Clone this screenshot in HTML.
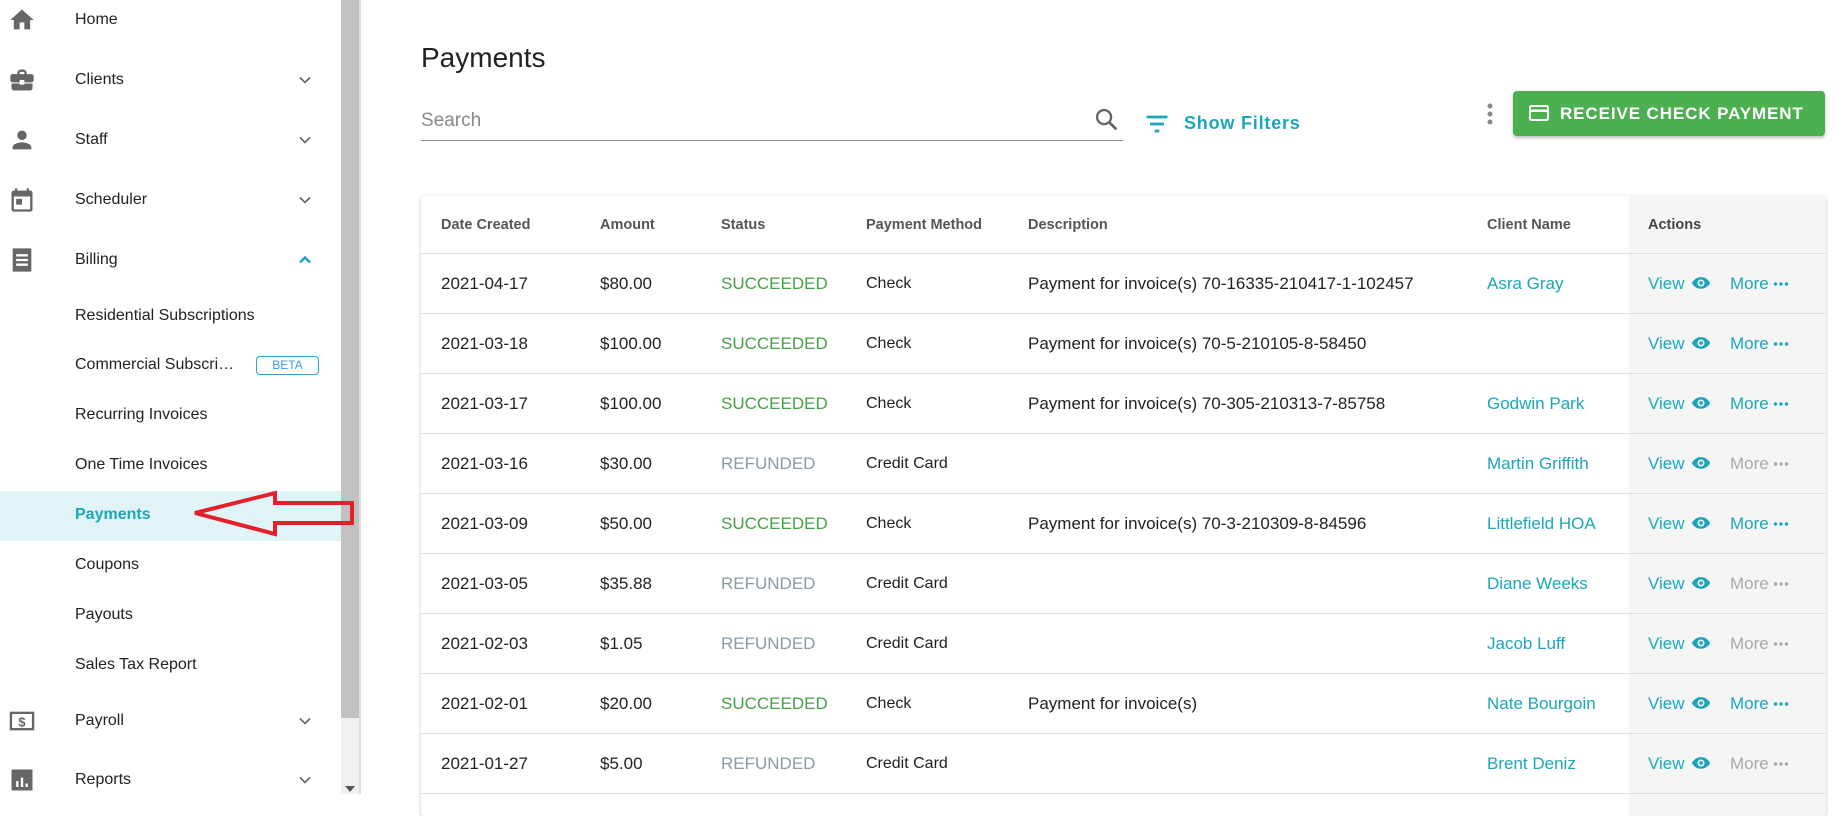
<!DOCTYPE html>
<html><head><meta charset="utf-8"><style>
*{margin:0;padding:0;box-sizing:border-box}
body{width:1847px;height:794px;overflow:hidden;background:#fff;font-family:"Liberation Sans",sans-serif;position:relative;color:#222}
.sb{position:absolute;left:0;top:0;width:341px;height:794px;background:#fff}
.it{position:absolute;left:0;width:341px;font-size:16px;color:#222}
.it .t{position:absolute;left:75px;transform:translateY(-50%)}
.it svg.ic{position:absolute;left:8px;transform:translateY(-50%)}
.chev{position:absolute;left:295px;transform:translateY(-50%)}
.scr{position:absolute;left:341px;top:0;width:18px;height:794px;background:#f1f1f1}
.thumb{position:absolute;left:341px;top:0;width:18px;height:718px;background:#c1c1c1}
.vline{position:absolute;left:359px;top:0;width:2px;height:794px;background:#ddd}
.abs{position:absolute}
.card{position:absolute;left:421px;top:196px;width:1405px;height:620px;background:#fff;box-shadow:0 1px 3px rgba(0,0,0,.25);border-radius:3px;overflow:hidden}
.act{position:absolute;left:1208px;top:0;width:197px;height:620px;background:#f5f5f5}
.row{position:absolute;left:0;width:1405px;height:60px;border-bottom:1px solid #e0e0e0}
.c{position:absolute;top:50%;transform:translateY(-50%);font-size:17px;white-space:nowrap}
.h .c{font-size:14.5px;font-weight:bold;color:#555}
.teal{color:#1ba6bc}
.suc{color:#43a047}
.ref{color:#8a9ba4}
.gm{color:#aaa}
</style></head><body>
<div class="sb">
 <div class="it" style="top:20px"><svg class="ic" width="28" height="28" viewBox="0 0 24 24"><path fill="#666" d="M10 20v-6h4v6h5v-8h3L12 3 2 12h3v8z"/></svg><span class="t">Home</span></div>
 <div class="it" style="top:80px"><svg class="ic" width="28" height="28" viewBox="0 0 24 24"><path fill="#666" d="M10 16v-1H3v4c0 1.1.9 2 2 2h14c1.1 0 2-.9 2-2v-4h-7v1h-4zm10-9h-4V5l-2-2h-4L8 5v2H4c-1.1 0-2 .9-2 2v3c0 1.1.9 2 2 2h6v-2h4v2h6c1.1 0 2-.9 2-2V9c0-1.1-.9-2-2-2zm-6 0h-4V5h4v2z"/></svg><span class="t">Clients</span><svg class="chev" width="20" height="20" viewBox="0 0 24 24"><path fill="none" stroke="#666" stroke-width="2" d="M6 9l6 6 6-6"/></svg></div>
 <div class="it" style="top:140px"><svg class="ic" width="28" height="28" viewBox="0 0 24 24"><path fill="#666" d="M12 12c2.2 0 4-1.8 4-4s-1.8-4-4-4-4 1.8-4 4 1.8 4 4 4zm0 2c-2.7 0-8 1.3-8 4v2h16v-2c0-2.7-5.3-4-8-4z"/></svg><span class="t">Staff</span><svg class="chev" width="20" height="20" viewBox="0 0 24 24"><path fill="none" stroke="#666" stroke-width="2" d="M6 9l6 6 6-6"/></svg></div>
 <div class="it" style="top:200px"><svg class="ic" width="28" height="28" viewBox="0 0 24 24"><path fill="#666" d="M19 4h-1V2h-2v2H8V2H6v2H5c-1.1 0-2 .9-2 2v14c0 1.1.9 2 2 2h14c1.1 0 2-.9 2-2V6c0-1.1-.9-2-2-2zm0 16H5V9h14v11zM7 11h5v5H7z"/></svg><span class="t">Scheduler</span><svg class="chev" width="20" height="20" viewBox="0 0 24 24"><path fill="none" stroke="#666" stroke-width="2" d="M6 9l6 6 6-6"/></svg></div>
 <div class="it" style="top:260px"><svg class="ic" width="28" height="28" viewBox="0 0 24 24"><path fill="#666" d="M4 2h16v20H4zM7 7v2h10V7zm0 4v2h10v-2zm0 4v2h10v-2z"/></svg><span class="t">Billing</span><svg class="chev" width="20" height="20" viewBox="0 0 24 24"><path fill="none" stroke="#1ba6bc" stroke-width="3" d="M6 15l6-6 6 6"/></svg></div>
 <div class="it" style="top:316px"><span class="t">Residential Subscriptions</span></div>
 <div class="it" style="top:365px"><span class="t">Commercial Subscri…</span><span style="position:absolute;left:256px;top:-9px;width:63px;height:19px;border:1px solid #3a9bd9;border-radius:4px;color:#3a9bd9;font-size:12px;text-align:center;line-height:17px">BETA</span></div>
 <div class="it" style="top:415px"><span class="t">Recurring Invoices</span></div>
 <div class="it" style="top:465px"><span class="t">One Time Invoices</span></div>
 <div class="abs" style="left:0;top:491px;width:341px;height:50px;background:#e0f3f7"></div>
 <div class="it" style="top:515px"><span class="t teal" style="font-weight:bold">Payments</span></div>
 <div class="it" style="top:565px"><span class="t">Coupons</span></div>
 <div class="it" style="top:615px"><span class="t">Payouts</span></div>
 <div class="it" style="top:665px"><span class="t">Sales Tax Report</span></div>
 <div class="it" style="top:721px"><svg class="ic" width="28" height="28" viewBox="0 0 24 24"><rect x="2.5" y="5" width="19" height="14" fill="none" stroke="#666" stroke-width="2"/><text x="12" y="16.5" font-size="11" font-weight="bold" text-anchor="middle" fill="#666" font-family="Liberation Sans">$</text></svg><span class="t">Payroll</span><svg class="chev" width="20" height="20" viewBox="0 0 24 24"><path fill="none" stroke="#666" stroke-width="2" d="M6 9l6 6 6-6"/></svg></div>
 <div class="it" style="top:780px"><svg class="ic" width="28" height="28" viewBox="0 0 24 24"><path fill="#666" d="M3 3h18v18H3zm4 10v5h2v-5zm4-3v8h2v-8zm4 5v3h2v-3z"/></svg><span class="t">Reports</span><svg class="chev" width="20" height="20" viewBox="0 0 24 24"><path fill="none" stroke="#666" stroke-width="2" d="M6 9l6 6 6-6"/></svg></div>
</div>
<div class="scr"></div><div class="thumb"></div><div class="vline"></div>
<div class="abs" style="left:345px;top:786px;width:0;height:0;border-left:5px solid transparent;border-right:5px solid transparent;border-top:6px solid #555"></div>
<svg class="abs" style="left:190px;top:488px" width="168" height="52" viewBox="0 0 168 52"><path d="M5 25 L85 5 L85 15 L162 15 L162 35 L85 35 L85 46 Z" fill="none" stroke="#e3202a" stroke-width="4" stroke-linejoin="miter"/></svg>

<div class="abs" style="left:421px;top:42px;font-size:28px;color:#222">Payments</div>
<div class="abs" style="left:421px;top:110px;font-size:19px;color:#888">Search</div>
<div class="abs" style="left:421px;top:140px;width:702px;height:1px;background:#888"></div>
<svg class="abs" style="left:1093px;top:106px" width="28" height="28" viewBox="0 0 24 24"><circle cx="9.5" cy="9.5" r="6" fill="none" stroke="#666" stroke-width="2"/><path d="M14 14l6 6" stroke="#666" stroke-width="2.4"/></svg>
<svg class="abs" style="left:1143px;top:110px" width="28" height="28" viewBox="0 0 24 24"><path d="M3 6h18M6 12h12M10 18h4" stroke="#1ba6bc" stroke-width="2.4"/></svg>
<div class="abs teal" style="left:1184px;top:113px;font-size:18px;font-weight:bold;letter-spacing:.8px">Show Filters</div>
<svg class="abs" style="left:1483px;top:102px" width="14" height="26" viewBox="0 0 14 26"><circle cx="7" cy="4" r="2.5" fill="#888"/><circle cx="7" cy="12" r="2.5" fill="#888"/><circle cx="7" cy="20" r="2.5" fill="#888"/></svg>
<div class="abs" style="left:1513px;top:91px;width:312px;height:45px;background:#4caf50;border-radius:4px;box-shadow:0 2px 3px rgba(0,0,0,.25);color:#fff;font-size:17px;font-weight:bold;letter-spacing:.9px;line-height:45px;padding-left:47px">RECEIVE CHECK PAYMENT</div>
<svg class="abs" style="left:1527px;top:101px" width="24" height="24" viewBox="0 0 24 24"><rect x="3" y="5" width="18" height="14" rx="1.5" fill="none" stroke="#fff" stroke-width="2"/><rect x="3" y="8.5" width="18" height="2.5" fill="#fff"/></svg>

<div class="card">
 <div class="act"></div>
 <div class="row h" style="top:0;height:58px">
  <span class="c" style="left:20px">Date Created</span><span class="c" style="left:179px">Amount</span><span class="c" style="left:300px">Status</span><span class="c" style="left:445px">Payment Method</span><span class="c" style="left:607px">Description</span><span class="c" style="left:1066px">Client Name</span><span class="c" style="left:1227px;color:#444">Actions</span>
 </div>
 <div id="rows"></div>
</div>
<script>
const d=[["2021-04-17","$80.00",1,"Check","Payment for invoice(s) 70-16335-210417-1-102457","Asra Gray"],
["2021-03-18","$100.00",1,"Check","Payment for invoice(s) 70-5-210105-8-58450",""],
["2021-03-17","$100.00",1,"Check","Payment for invoice(s) 70-305-210313-7-85758","Godwin Park"],
["2021-03-16","$30.00",0,"Credit Card","","Martin Griffith"],
["2021-03-09","$50.00",1,"Check","Payment for invoice(s) 70-3-210309-8-84596","Littlefield HOA"],
["2021-03-05","$35.88",0,"Credit Card","","Diane Weeks"],
["2021-02-03","$1.05",0,"Credit Card","","Jacob Luff"],
["2021-02-01","$20.00",1,"Check","Payment for invoice(s)","Nate Bourgoin"],
["2021-01-27","$5.00",0,"Credit Card","","Brent Deniz"]];
const eye='<svg width="20" height="14" viewBox="0 0 24 16" style="vertical-align:-1px;margin-left:6px"><path d="M12 1C6.5 1 2.5 5 1 8c1.5 3 5.5 7 11 7s9.5-4 11-7c-1.5-3-5.5-7-11-7z" fill="#1ba6bc"/><circle cx="12" cy="8" r="4.2" fill="#f5f5f5"/><circle cx="12" cy="8" r="2.2" fill="#1ba6bc"/></svg>';
const dots=c=>`<svg width="16" height="6" viewBox="0 0 16 6" style="margin-left:4px;vertical-align:2px"><circle cx="2.5" cy="3" r="1.7" fill="${c}"/><circle cx="8" cy="3" r="1.7" fill="${c}"/><circle cx="13.5" cy="3" r="1.7" fill="${c}"/></svg>`;
let h='';d.forEach((r,i)=>{const t=58+i*60;const mc=r[2]?'teal':'gm';
h+=`<div class="row" style="top:${t}px"><span class="c" style="left:20px">${r[0]}</span><span class="c" style="left:179px">${r[1]}</span><span class="c ${r[2]?'suc':'ref'}" style="left:300px">${r[2]?'SUCCEEDED':'REFUNDED'}</span><span class="c" style="left:445px;font-size:16px">${r[3]}</span><span class="c" style="left:607px">${r[4]}</span><span class="c teal" style="left:1066px">${r[5]}</span><span class="c teal" style="left:1227px">View${eye}</span><span class="c ${mc}" style="left:1309px">More${dots(r[2]?'#1ba6bc':'#aaa')}</span></div>`});
document.getElementById('rows').innerHTML=h;
</script>
</body></html>
